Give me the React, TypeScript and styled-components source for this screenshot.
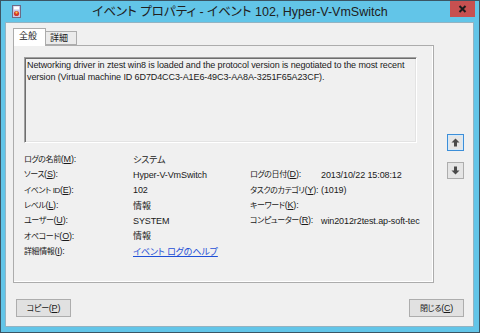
import styled, { createGlobalStyle } from "styled-components";

const SANS = `"Liberation Sans", "Noto Sans CJK JP", sans-serif`

const GlobalStyle = createGlobalStyle`
  html, body {
    margin: 0;
    padding: 0;
  }
  body {
    width: 480px;
    height: 333px;
    overflow: hidden;
    background: #fff;
  }
  * {
    box-sizing: border-box;
  }
`

interface Field {
    label: string
    key: string
    value?: string
    link?: boolean
}

const leftFields: Field[] = [
    { label: 'ログの名前', key: 'M', value: 'システム' },
    { label: 'ソース', key: 'S', value: 'Hyper-V-VmSwitch' },
    { label: 'イベント ID', key: 'E', value: '102' },
    { label: 'レベル', key: 'L', value: '情報' },
    { label: 'ユーザー', key: 'U', value: 'SYSTEM' },
    { label: 'オペコード', key: 'O', value: '情報' },
    { label: '詳細情報', key: 'I', value: 'イベント ログのヘルプ', link: true },
]

const rightFields: (Field | null)[] = [
    null,
    { label: 'ログの日付', key: 'D', value: '2013/10/22 15:08:12' },
    { label: 'タスクのカテゴリ', key: 'Y', value: '(1019)' },
    { label: 'キーワード', key: 'K', value: '' },
    { label: 'コンピューター', key: 'R', value: 'win2012r2test.ap-soft-tec' },
    null,
    null,
]

function AppIcon() {
    return <svg width="9" height="13" viewBox="0 0 9 13">
        <rect x="0.5" y="0.5" width="8" height="12" fill="#c9c6e6" stroke="#6c6a86" />
        <rect x="2" y="1.5" width="5" height="3" fill="#fff" />
        <circle cx="4.5" cy="8.5" r="2.6" fill="#d23b2b" />
        <circle cx="4.5" cy="7.6" r="1.1" fill="#f6d44a" />
    </svg>
}

function ArrowIcon({ down }: { down?: boolean }) {
    return <svg width="9" height="9" viewBox="0 0 9 9" style={down ? { transform: 'rotate(180deg)' } : undefined}>
        <polygon points="4.5,0.5 8.5,4.5 6,4.5 6,8.5 3,8.5 3,4.5 0.5,4.5" fill="#4a4a4a" />
    </svg>
}

function FieldLabel({ field }: { field: Field }) {
    return <Label>
        {field.label}<Key>(<u>{field.key}</u>):</Key>
    </Label>
}

function FieldValue({ field }: { field: Field }) {
    return <Value>
        {field.link ? <HelpLink>{field.value}</HelpLink> : field.value}
    </Value>
}

export default function App() {
    return <>
        <GlobalStyle />
        <Window>
            <TitleBar>
                <TitleIcon>
                    <AppIcon />
                </TitleIcon>
                <TitleText>イベント プロパティ - イベント 102, Hyper-V-VmSwitch</TitleText>
                <CloseButton>
                    <svg width="9" height="8" viewBox="0 0 9 8">
                        <path d="M1.5 1 L7.5 7 M7.5 1 L1.5 7" stroke="#1c1c1c" strokeWidth="2" />
                    </svg>
                </CloseButton>
            </TitleBar>
            <Client>
                <Body>
                    <TabArea>
                        <TabStrip>
                            <Tab $active>全般</Tab>
                            <Tab>詳細</Tab>
                        </TabStrip>
                        <Panel>
                            <Description>
                                {'Networking driver in ztest win8 is loaded and the protocol version is negotiated to the most recent\nversion (Virtual machine ID 6D7D4CC3-A1E6-49C3-AA8A-3251F65A23CF).'}
                            </Description>
                            <Details>
                                {leftFields.map((f, i) => {
                                    const r = rightFields[i]
                                    return [
                                        <FieldLabel key={'l' + i} field={f} />,
                                        <FieldValue key={'v' + i} field={f} />,
                                        r ? <FieldLabel key={'rl' + i} field={r} /> : <span key={'rl' + i} />,
                                        r ? <FieldValue key={'rv' + i} field={r} /> : <span key={'rv' + i} />,
                                    ]
                                })}
                            </Details>
                        </Panel>
                    </TabArea>
                    <SideButtons>
                        <ArrowButton $focused>
                            <ArrowIcon />
                        </ArrowButton>
                        <ArrowButton>
                            <ArrowIcon down />
                        </ArrowButton>
                    </SideButtons>
                </Body>
                <Footer>
                    <Button>コピー<Key>(<u>P</u>)</Key></Button>
                    <Button>閉じる<Key>(<u>C</u>)</Key></Button>
                </Footer>
            </Client>
        </Window>
    </>
}

const Window = styled.div`
  width: 480px;
  height: 333px;
  background: #62c5e8;
  border: 1px solid #3b5564;
  display: flex;
  flex-direction: column;
  font-family: ${SANS};
  font-feature-settings: "palt";
  color: #1a1a1a;
`

const TitleBar = styled.div`
  height: 21px;
  flex: none;
  display: grid;
  grid-template-columns: 1fr auto 1fr;
  align-items: start;
`

const TitleIcon = styled.div`
  padding: 4px 0 0 11px;
  line-height: 0;
`

const TitleText = styled.div`
  font-size: 12.5px;
  line-height: 14px;
  padding-top: 4px;
  color: #202020;
  white-space: nowrap;
`

const CloseButton = styled.div`
  justify-self: end;
  margin-right: 4px;
  width: 25px;
  height: 16px;
  background: #c75050;
  display: flex;
  align-items: center;
  justify-content: center;
`

const Client = styled.div`
  flex: 1;
  margin: 0 5px 5px 4px;
  background: #f0f0f0;
  border: 1px solid #93b3c2;
  display: flex;
  flex-direction: column;
  padding: 5px 9px 9px 7px;
`

const Body = styled.div`
  display: flex;
  gap: 13px;
  align-items: flex-start;
`

const TabArea = styled.div`
  width: 421px;
  display: flex;
  flex-direction: column;
`

const TabStrip = styled.div`
  height: 17px;
  display: flex;
  align-items: flex-end;
`

const Tab = styled.div<{ $active?: boolean }>`
  position: relative;
  z-index: 1;
  width: ${p => p.$active ? 33 : 31}px;
  height: ${p => p.$active ? 18 : 14}px;
  margin-bottom: ${p => p.$active ? -1 : 0}px;
  background: ${p => p.$active ? '#ffffff' : '#ebebeb'};
  border: 1px solid #acacac;
  border-bottom: ${p => p.$active ? 'none' : '1px solid #acacac'};
  border-left: ${p => p.$active ? '1px solid #acacac' : 'none'};
  font-size: 9px;
  line-height: ${p => p.$active ? 15 : 12}px;
  padding-left: ${p => p.$active ? 5 : 4}px;
  color: #1a1a1a;
`

const Panel = styled.div`
  height: 238px;
  border: 1px solid #acacac;
  box-shadow: inset -1px -1px 0 #fff;
  background: #f0f0f0;
  padding: 11px 16px 0 10px;
`

const Description = styled.div`
  height: 86px;
  border: 1px solid;
  border-color: #a0a0a0 #ffffff #ffffff #a0a0a0;
  box-shadow: inset 1px 1px 0 #6e6e6e, inset -1px -1px 0 #e3e3e3;
  background: #f0f0f0;
  padding: 1px 2px;
  font-size: 9px;
  line-height: 12px;
  letter-spacing: -0.1px;
  white-space: pre-line;
`

const Details = styled.div`
  margin-top: 9px;
  display: grid;
  grid-template-columns: 109px 117px 71px 1fr;
  grid-auto-rows: 15.33px;
  align-items: center;
`

const Label = styled.span`
  font-size: 8px;
  line-height: 12px;
  letter-spacing: -0.4px;
  white-space: nowrap;
`

const Key = styled.span`
  font-size: 9px;
  letter-spacing: -0.2px;
`

const Value = styled.span`
  font-size: 9px;
  line-height: 12px;
  letter-spacing: -0.1px;
  white-space: nowrap;
`

const HelpLink = styled.a`
  color: #1f4fd6;
  text-decoration: underline;
  cursor: pointer;
`

const SideButtons = styled.div`
  margin-top: 106px;
  display: flex;
  flex-direction: column;
  gap: 11px;
`

const ArrowButton = styled.div<{ $focused?: boolean }>`
  width: 17px;
  height: 17px;
  background: #e5e5e5;
  border: 1px solid ${p => p.$focused ? '#3c8ed8' : '#adadad'};
  box-shadow: ${p => p.$focused ? 'inset 0 0 0 1px #d6e9f8' : 'none'};
  display: flex;
  align-items: center;
  justify-content: center;
`

const Footer = styled.div`
  margin-top: 16px;
  padding-left: 3px;
  display: flex;
  justify-content: space-between;
`

const Button = styled.div`
  width: 55px;
  height: 18px;
  background: #e1e1e1;
  border: 1px solid #adadad;
  font-size: 8px;
  line-height: 16px;
  letter-spacing: -0.3px;
  text-align: center;
  color: #1a1a1a;
`
